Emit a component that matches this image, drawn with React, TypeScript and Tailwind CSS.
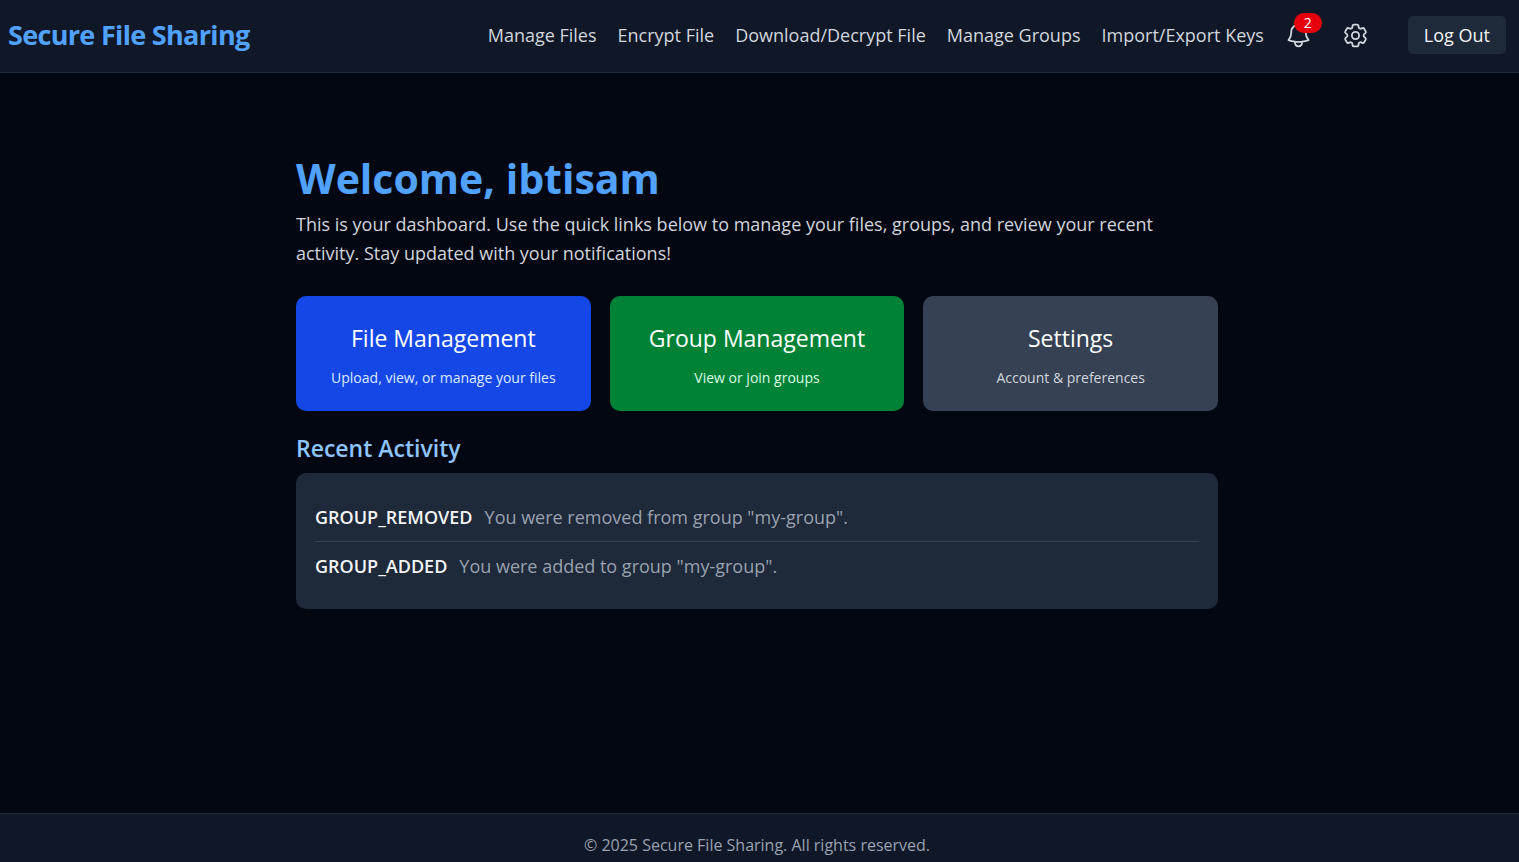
import { HiOutlineBell, HiOutlineCog6Tooth } from "react-icons/hi2";

const navLinks = [
  "Manage Files",
  "Encrypt File",
  "Download/Decrypt File",
  "Manage Groups",
  "Import/Export Keys",
];

const quickLinks = [
  { title: "File Management", text: "Upload, view, or manage your files", card: "bg-blue-700", sub: "text-blue-100" },
  { title: "Group Management", text: "View or join groups", card: "bg-green-700", sub: "text-green-100" },
  { title: "Settings", text: "Account & preferences", card: "bg-gray-700", sub: "text-gray-300" },
];

const activity = [
  { type: "GROUP_REMOVED", text: 'You were removed from group "my-group".' },
  { type: "GROUP_ADDED", text: 'You were added to group "my-group".' },
];

function Header() {
  return (
    <header className="border-b border-gray-800 bg-gray-900 pl-2 pr-[13px]">
      <div className="flex items-center justify-between pt-4 pb-[18px]">
        <a href="#" className="text-[27px] leading-9 font-bold tracking-tight text-blue-400">
          Secure File Sharing
        </a>
        <div className="flex items-center">
          <nav className="flex items-center gap-[21px] text-gray-300">
            {navLinks.map((label) => (
              <a key={label} href="#">{label}</a>
            ))}
          </nav>
          <button type="button" aria-label="Notifications" className="relative ml-5">
            <HiOutlineBell className="size-[29px] text-gray-300" />
            <span className="absolute -top-2 left-2.5 flex h-5 items-center rounded-full bg-red-600 px-2.5 text-sm text-white">
              2
            </span>
          </button>
          <button type="button" aria-label="Settings" className="ml-7">
            <HiOutlineCog6Tooth className="size-[29px] text-gray-300" />
          </button>
          <button type="button" className="ml-[38px] rounded-[5px] bg-gray-800 px-4 py-[5px] text-gray-100">
            Log Out
          </button>
        </div>
      </div>
    </header>
  );
}

export default function App() {
  return (
    <div className="flex min-h-screen flex-col bg-gray-950 font-['Open_Sans','Noto_Sans',sans-serif] text-lg text-gray-100">
      <Header />
      <main className="flex-1 pr-[5px]">
        <div className="mx-auto max-w-[922px] pt-20">
          <h1 className="text-[41px] leading-[51px] font-bold text-blue-400">Welcome, ibtisam</h1>
          <p className="mt-1.5 leading-[29px] text-gray-300">
            This is your dashboard. Use the quick links below to manage your files, groups, and review your recent
            activity. Stay updated with your notifications!
          </p>
          <div className="mt-7 grid grid-cols-3 gap-[19px]">
            {quickLinks.map((q) => (
              <a key={q.title} href="#" className={`rounded-[10px] px-6 pt-6 pb-[22px] text-center ${q.card}`}>
                <span className="block text-[23px] leading-9 text-white">{q.title}</span>
                <span className={`mt-2.5 block text-sm leading-[23px] ${q.sub}`}>{q.text}</span>
              </a>
            ))}
          </div>
          <h2 className="mt-5 text-[23px] leading-[34px] font-semibold text-blue-300">Recent Activity</h2>
          <ul className="mt-2 divide-y divide-gray-700 rounded-[10px] bg-gray-800 px-[19px] pt-5 pb-[19px]">
            {activity.map((a) => (
              <li key={a.type} className="flex gap-3 py-2.5 leading-7">
                <span className="font-semibold">{a.type}</span>
                <span className="text-gray-400">{a.text}</span>
              </li>
            ))}
          </ul>
        </div>
      </main>
      <footer className="border-t border-gray-800 bg-gray-900 pt-[19px] pb-[5px] pr-[5px] text-center text-base text-gray-400">
        © 2025 Secure File Sharing. All rights reserved.
      </footer>
    </div>
  );
}
